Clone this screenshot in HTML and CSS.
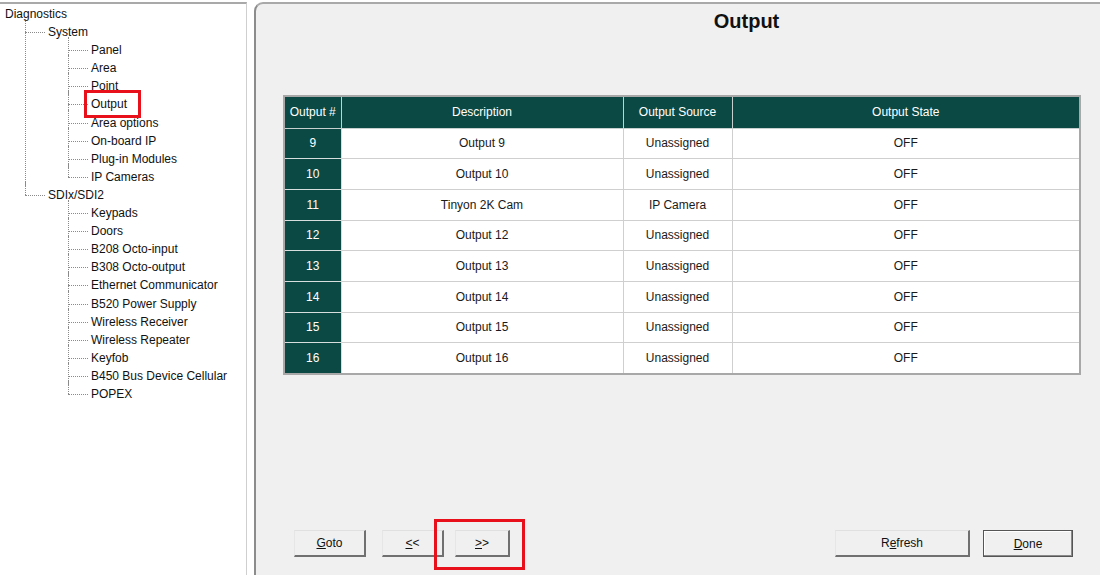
FILE: index.html
```html
<!DOCTYPE html>
<html lang="en">

<head>
    <meta charset="UTF-8">
    <meta name="viewport" content="width=device-width, initial-scale=1.0">
    <title>Diagnostics - Output</title>
    <link rel="stylesheet" href="styles.css">
</head>

<body>
    <div class="window">
        <!-- left tree -->
        <div class="tree-pane">
            <ul class="tree">
                <li class="root">Diagnostics
                    <ul>
                        <li>System
                            <ul>
                                <li>Panel</li>
                                <li>Area</li>
                                <li>Point</li>
                                <li><span class="marked">Output</span></li>
                                <li>Area options</li>
                                <li>On-board IP</li>
                                <li>Plug-in Modules</li>
                                <li>IP Cameras</li>
                            </ul>
                        </li>
                        <li>SDIx/SDI2
                            <ul>
                                <li>Keypads</li>
                                <li>Doors</li>
                                <li>B208 Octo-input</li>
                                <li>B308 Octo-output</li>
                                <li>Ethernet Communicator</li>
                                <li>B520 Power Supply</li>
                                <li>Wireless Receiver</li>
                                <li>Wireless Repeater</li>
                                <li>Keyfob</li>
                                <li>B450 Bus Device Cellular</li>
                                <li>POPEX</li>
                            </ul>
                        </li>
                    </ul>
                </li>
            </ul>
        </div>

        <!-- right content -->
        <div class="content-pane">
            <h1 class="title">Output</h1>

            <table class="output-table">
                <thead>
                    <tr>
                        <th class="col-num">Output #</th>
                        <th class="col-desc">Description</th>
                        <th class="col-src">Output Source</th>
                        <th class="col-state">Output State</th>
                    </tr>
                </thead>
                <tbody>
                    <tr><td class="num">9</td><td>Output 9</td><td>Unassigned</td><td>OFF</td></tr>
                    <tr><td class="num">10</td><td>Output 10</td><td>Unassigned</td><td>OFF</td></tr>
                    <tr><td class="num">11</td><td>Tinyon 2K Cam</td><td>IP Camera</td><td>OFF</td></tr>
                    <tr><td class="num">12</td><td>Output 12</td><td>Unassigned</td><td>OFF</td></tr>
                    <tr><td class="num">13</td><td>Output 13</td><td>Unassigned</td><td>OFF</td></tr>
                    <tr><td class="num">14</td><td>Output 14</td><td>Unassigned</td><td>OFF</td></tr>
                    <tr><td class="num">15</td><td>Output 15</td><td>Unassigned</td><td>OFF</td></tr>
                    <tr><td class="num">16</td><td>Output 16</td><td>Unassigned</td><td>OFF</td></tr>
                </tbody>
            </table>

            <div class="button-bar">
                <button class="btn btn-goto"><u>G</u>oto</button>
                <button class="btn btn-prev"><u>&lt;</u>&lt;</button>
                <button class="btn btn-next marked-btn"><u>&gt;</u>&gt;</button>
                <div class="spacer"></div>
                <button class="btn btn-refresh">R<u>e</u>fresh</button>
                <button class="btn btn-done default"><u>D</u>one</button>
            </div>
        </div>
    </div>
</body>

</html>
```

FILE: styles.css
```css
* {
    box-sizing: border-box;
}

body {
    margin: 0;
    background: #fff;
    font-family: "Liberation Sans", Arial, sans-serif;
    font-size: 12px;
    color: #111;
}

.window {
    display: flex;
    height: 575px;
    padding-top: 2px;
    overflow: hidden;
}

/* ---------- tree ---------- */
.tree-pane {
    width: 247px;
    flex: none;
    background: #fff;
    border-top: 2px solid #a9a9a9;
    border-right: 1px solid #cfcfcf;
    padding: 1px 0 0 5px;
}

.tree,
.tree ul {
    list-style: none;
    margin: 0;
    padding: 0;
}

.tree ul {
    padding-left: 20px;
}

.tree li {
    line-height: 18.1px;
    white-space: nowrap;
}

.tree ul li {
    position: relative;
    padding-left: 23px;
}

/* horizontal connector */
.tree ul li::before {
    content: '';
    position: absolute;
    left: 0;
    top: 9px;
    width: 20px;
    border-top: 1px dotted #8a8a8a;
}

/* vertical connector */
.tree ul li::after {
    content: '';
    position: absolute;
    left: 0;
    top: -4px;
    bottom: 0;
    border-left: 1px dotted #8a8a8a;
}

.tree ul li:last-child::after {
    bottom: auto;
    height: 13px;
}

.marked {
    position: relative;
}

.marked::after {
    content: '';
    position: absolute;
    left: -7px;
    right: -14px;
    top: -7px;
    bottom: -7px;
    border: 3px solid #e8101a;
}

/* ---------- content ---------- */
.content-pane {
    flex: 1;
    margin-left: 7px;
    margin-right: -110px;
    background: #f0f0f0;
    border-top: 2px solid #a9a9a9;
    border-left: 2px solid #8c8c8c;
    border-top-left-radius: 9px;
    display: flex;
    flex-direction: column;
    padding-left: 27px;
}

.title {
    margin: 0;
    padding: 5px 0 0 0;
    font-size: 20px;
    line-height: 24px;
    font-weight: bold;
    text-align: center;
    color: #111;
}

.output-table {
    margin-top: 62px;
    width: 798px;
    border-collapse: collapse;
    border: 2px solid #a8a8a8;
    background: #fff;
    table-layout: fixed;
}

.output-table th,
.output-table td {
    text-align: center;
    font-weight: normal;
    padding: 0;
}

.output-table th {
    height: 32px;
    background: #0b4944;
    color: #fff;
    border: 1px solid #c8d0cf;
    border-top: none;
}

.output-table td {
    height: 30.7px;
    border: 1px solid #cfcfcf;
    color: #1a1a1a;
}

.output-table td.num {
    background: #0b4944;
    color: #fff;
    border-color: #d8dedd;
}

.col-num {
    width: 57px;
}

.col-desc {
    width: 282px;
}

.col-src {
    width: 109px;
}

/* ---------- buttons ---------- */
.button-bar {
    margin-top: auto;
    display: flex;
    align-items: center;
    padding: 0 137px 18px 11px;
}

.spacer {
    flex: 1;
}

.btn {
    height: 27px;
    font-family: "Liberation Sans", Arial, sans-serif;
    font-size: 12px;
    color: #111;
    background: #f0f0f0;
    border-top: 1px solid #e0e0e0;
    border-left: 1px solid #e6e6e6;
    border-right: 2px solid #707070;
    border-bottom: 2px solid #707070;
    padding: 0;
}

.btn-goto {
    width: 72px;
}

.btn-prev {
    width: 62px;
    margin-left: 16px;
}

.btn-next {
    width: 55px;
    margin-left: 11px;
}

.btn-refresh {
    width: 135px;
}

.btn-done {
    width: 90px;
    margin-left: 13px;
}

.btn.default {
    border: 1px solid #555;
    box-shadow: inset -1px -1px 0 #8a8a8a, inset 1px 1px 0 #fff;
}

.marked-btn {
    position: relative;
}

.marked-btn::after {
    content: '';
    position: absolute;
    left: -22px;
    right: -17px;
    top: -12px;
    bottom: -15px;
    border: 3px solid #e8101a;
}
```
